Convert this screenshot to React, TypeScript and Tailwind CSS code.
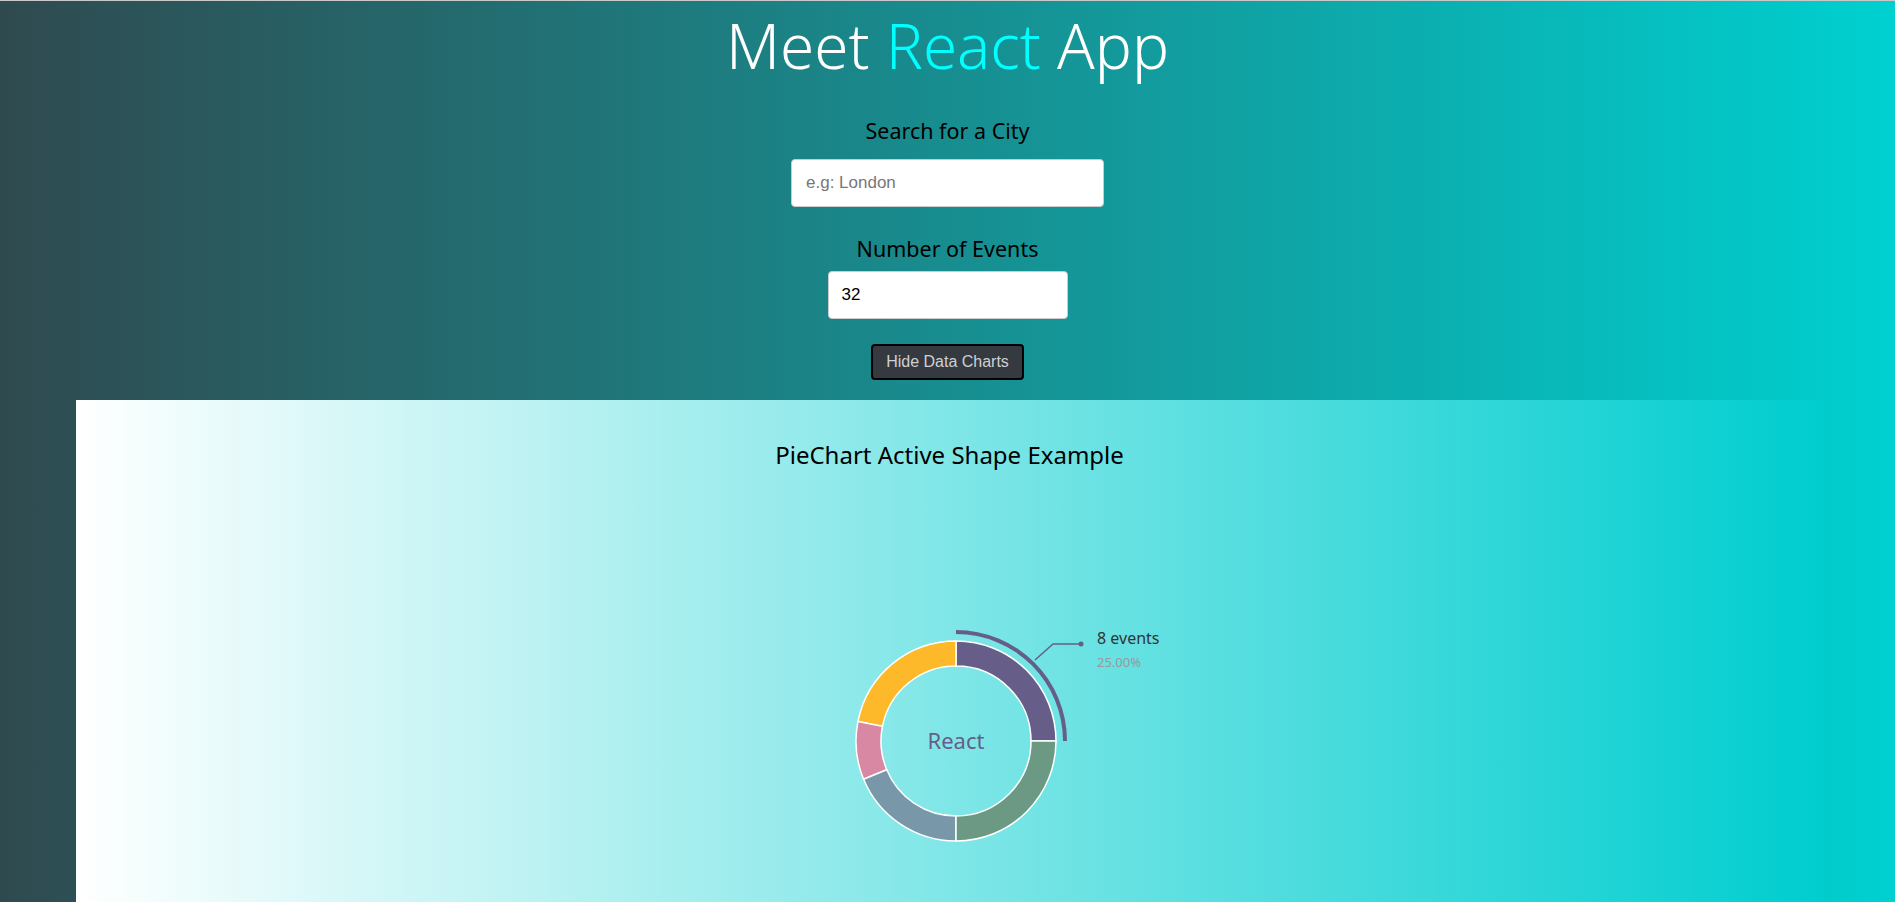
import React from 'react';

const CX = 880;
const CY = 270;

type Slice = { name: string; value: number; color: string };

const slices: Slice[] = [
  { name: 'London', value: 8, color: '#665e88' },
  { name: 'Berlin', value: 7, color: '#fdb92a' },
  { name: 'Paris', value: 3, color: '#d888a3' },
  { name: 'Rome', value: 6, color: '#7897a9' },
  { name: 'Madrid', value: 8, color: '#6b9983' },
];

// point on circle, angle in degrees, counter-clockwise like recharts
const pt = (r: number, a: number) => {
  const rad = (a * Math.PI) / 180;
  return [CX + r * Math.cos(rad), CY - r * Math.sin(rad)];
};

const sectorPath = (r0: number, r1: number, a0: number, a1: number) => {
  const [x0, y0] = pt(r1, a0);
  const [x1, y1] = pt(r1, a1);
  const [x2, y2] = pt(r0, a1);
  const [x3, y3] = pt(r0, a0);
  const large = a1 - a0 > 180 ? 1 : 0;
  return `M${x0},${y0} A${r1},${r1} 0 ${large} 0 ${x1},${y1} L${x2},${y2} A${r0},${r0} 0 ${large} 1 ${x3},${y3} Z`;
};

function PieChartBox() {
  const total = slices.reduce((s, d) => s + d.value, 0);
  let angle = 0;
  const arcs = slices.map((d) => {
    const start = angle;
    angle += (d.value / total) * 360;
    return { ...d, start, end: angle };
  });
  const active = arcs[0];

  return (
    <svg width="1747" height="460" className="block">
      {arcs.map((a) => (
        <path key={a.name} d={sectorPath(75, 100, a.start, a.end)} fill={a.color} stroke="#fff" strokeWidth={1.5} />
      ))}
      <path d={sectorPath(107, 111, active.start, active.end)} fill={active.color} />
      <path
        d={`M${CX + 79},${CY - 81} L${CX + 97},${CY - 97} L${CX + 125},${CY - 97}`}
        stroke={active.color}
        fill="none"
        strokeWidth={1.5}
      />
      <circle cx={CX + 125} cy={CY - 97} r={2.5} fill={active.color} />
      <text x={CX + 141} y={CY - 97} fill="#333" fontSize={16} fontFamily="'Noto Sans', sans-serif">
        8 events
      </text>
      <text x={CX + 141} y={CY - 74} fill="#999" fontSize={13} fontFamily="'Noto Sans', sans-serif">
        25.00%
      </text>
      <text x={CX} y={CY + 8} textAnchor="middle" fill="#665e88" fontSize={22} fontFamily="'Noto Sans', sans-serif">
        React
      </text>
    </svg>
  );
}

export default function App() {
  return (
    <div className="min-h-screen border-t border-[#c9c9c9] bg-[linear-gradient(to_right,#2f4a4f,#00d0d0)] font-['Noto_Sans',sans-serif] overflow-hidden">
      <h1 className="text-center text-[62px] font-light leading-[76px] text-white pt-[6px]">
        Meet <span className="text-[#00ffff]">React</span> App
      </h1>

      <div className="flex flex-col items-center">
        <label className="mt-[33px] text-[21.5px] leading-[30px] text-black">Search for a City</label>
        <input
          className="mt-[13px] h-[48px] w-[313px] rounded-[4px] border border-[#ccc] bg-white px-[14px] text-[17px] font-['Liberation_Sans',Arial,sans-serif] text-black placeholder:text-[#777] outline-none"
          placeholder="e.g: London"
        />

        <label className="mt-[27px] text-[21.5px] leading-[30px] text-black">Number of Events</label>
        <input
          className="mt-[7px] h-[48px] w-[240px] rounded-[4px] border border-[#ccc] bg-white px-[13px] text-[17px] font-['Liberation_Sans',Arial,sans-serif] text-black outline-none"
          defaultValue="32"
        />

        <button className="mt-[25px] h-[36px] w-[153px] rounded-[4px] border-2 border-black bg-[#343a40] text-[16px] font-['Liberation_Sans',Arial,sans-serif] text-[#d0d0d0]">
          Hide Data Charts
        </button>
      </div>

      <div className="mt-[20px] ml-[76px] w-[1747px] bg-[linear-gradient(to_right,#ffffff,#00cdcf)]">
        <h2 className="pt-[39px] text-center text-[24px] leading-[32px] text-black">PieChart Active Shape Example</h2>
        <PieChartBox />
      </div>
    </div>
  );
}
